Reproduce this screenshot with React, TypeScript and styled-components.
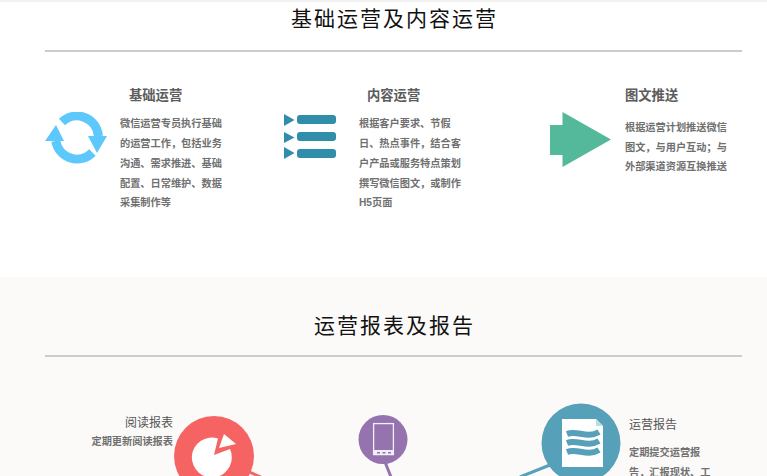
import React from "react";
import styled, { createGlobalStyle } from "styled-components";

const Global = createGlobalStyle`
  html, body { margin: 0; padding: 0; background: #fff; }
  body { font-family: "Liberation Sans", "Noto Sans CJK SC", sans-serif; overflow: hidden; }
`;

const Page = styled.div`
  width: 767px;
  height: 476px;
  overflow: hidden;
  border-top: 2px solid #f2f2f2;
  box-sizing: border-box;
`;

const Section = styled.section<{ $bg: string; $h: number; $pt: number }>`
  background: ${(p) => p.$bg};
  height: ${(p) => p.$h}px;
  padding-top: ${(p) => p.$pt}px;
  box-sizing: border-box;
`;

const Title = styled.h2<{ $h: number }>`
  margin: 0 25px 0 45px;
  padding-left: 2px;
  height: ${(p) => p.$h}px;
  line-height: 32px;
  font-size: 21px;
  font-weight: 400;
  letter-spacing: 2px;
  color: #111;
  text-align: center;
  border-bottom: 2px solid #ccc;
  box-sizing: border-box;
`;

const Features = styled.div`
  display: grid;
  grid-template-columns: 239px 266px 1fr;
  margin: 32px 0 0 45px;
`;

const Feature = styled.div<{ $gap: number }>`
  display: flex;
  align-items: flex-start;
  gap: ${(p) => p.$gap}px;
`;

const IconSlot = styled.div<{ $w: number; $top: number }>`
  flex: none;
  width: ${(p) => p.$w}px;
  margin-top: ${(p) => p.$top}px;
  line-height: 0;
`;

const Copy = styled.div`
  width: 104px;
  padding-top: 2px;
`;

const Heading = styled.h3<{ $indent: number; $gap: number }>`
  margin: 0 0 ${(p) => p.$gap}px ${(p) => p.$indent}px;
  font-size: 13.3px;
  line-height: 20px;
  font-weight: 700;
  color: #5c5c5c;
  white-space: nowrap;
`;

const Body = styled.p`
  margin: 0;
  font-size: 10.2px;
  line-height: 19.7px;
  font-weight: 700;
  color: #707070;
`;

const Diagram = styled.div`
  position: relative;
  height: 120px;
`;

const Node = styled.svg<{ $x: number; $y: number }>`
  position: absolute;
  left: ${(p) => p.$x}px;
  top: ${(p) => p.$y}px;
  display: block;
`;

const Note = styled.div<{ $x: number; $y: number; $w: number; $align?: string }>`
  position: absolute;
  left: ${(p) => p.$x}px;
  top: ${(p) => p.$y}px;
  width: ${(p) => p.$w}px;
  text-align: ${(p) => p.$align ?? "left"};
`;

const NoteTitle = styled.div<{ $gap: number }>`
  font-size: 12px;
  line-height: 18px;
  color: #555;
  margin-bottom: ${(p) => p.$gap}px;
`;

const NoteBody = styled.div<{ $lh: number }>`
  font-size: 10.2px;
  line-height: ${(p) => p.$lh}px;
  font-weight: 700;
  color: #707070;
`;

const RefreshIcon = () => (
  <svg width="62" height="52" viewBox="0 0 62 52">
    <g fill="none" stroke="#5cc8fb" strokeWidth="9">
      <path d="M17 10.100A21.500 21.500 0 0 1 53.400 24" />
      <path d="M10.800 29A21.500 21.500 0 0 0 47.400 40.500" />
    </g>
    <path d="M11 13L0 29H19Z M43 24H62L52 41Z" fill="#5cc8fb" />
  </svg>
);

const ListIcon = () => (
  <svg width="53" height="46" viewBox="0 0 53 46">
    <g fill="#318eaa">
      <path d="M0 0L10.500 6L0 12Z" />
      <rect x="13" y="1" width="39" height="9" rx="3" />
      <path d="M0 18L10.500 23.500L0 29Z" />
      <rect x="13" y="18" width="39" height="9" rx="3" />
      <path d="M0 33L10.500 39L0 45Z" />
      <rect x="13" y="35" width="39" height="9" rx="3" />
    </g>
  </svg>
);

const ArrowIcon = () => (
  <svg width="61" height="55" viewBox="0 0 61 55">
    <path d="M0 13H12.500V0L61 27.500L12.500 55V43H0Z" fill="#53b99a" />
  </svg>
);

export default function App() {
  return (
    <Page>
      <Global />
      <Section $bg="#fff" $h={275} $pt={1}>
        <Title $h={49}>基础运营及内容运营</Title>
        <Features>
          <Feature $gap={13}>
            <IconSlot $w={62} $top={28}><RefreshIcon /></IconSlot>
            <Copy>
              <Heading $indent={9} $gap={8.4}>基础运营</Heading>
              <Body>微信运营专员执行基础的运营工作，包括业务沟通、需求推进、基础配置、日常维护、数据采集制作等</Body>
            </Copy>
          </Feature>
          <Feature $gap={22}>
            <IconSlot $w={53} $top={30}><ListIcon /></IconSlot>
            <Copy>
              <Heading $indent={8} $gap={8.4}>内容运营</Heading>
              <Body>根据客户要求、节假日、热点事件，结合客户产品或服务特点策划撰写微信图文，或制作H5页面</Body>
            </Copy>
          </Feature>
          <Feature $gap={14}>
            <IconSlot $w={61} $top={28}><ArrowIcon /></IconSlot>
            <Copy>
              <Heading $indent={0} $gap={12}>图文推送</Heading>
              <Body>根据运营计划推送微信图文，与用户互动；与外部渠道资源互换推送</Body>
            </Copy>
          </Feature>
        </Features>
      </Section>
      <Section $bg="#fbfaf8" $h={199} $pt={33}>
        <Title $h={47}>运营报表及报告</Title>
        <Diagram>
          <Node $x={240} $y={60} width="320" height="70" viewBox="0 0 320 70">
            <path d="M7 54L32 65" stroke="#f56462" strokeWidth="3" />
            <path d="M145 45L151 60" stroke="#9473ae" strokeWidth="3" />
            <path d="M310 48L280 60" stroke="#56a0b9" strokeWidth="3" />
          </Node>
          <Node $x={174} $y={59} width="80" height="80" viewBox="0 0 80 80">
            <circle cx="40" cy="40" r="40" fill="#f56462" />
            <path d="M40 39L44 22.400A20 20 0 1 0 56 33Z" fill="#fff" />
            <path d="M45 32L50 18L62 28Z" fill="#fff" />
          </Node>
          <Node $x={358} $y={58} width="50" height="50" viewBox="0 0 50 50">
            <circle cx="25" cy="24.500" r="24.500" fill="#9473ae" />
            <rect x="15.600" y="8.600" width="19.800" height="31" fill="none" stroke="#f3eff6" strokeWidth="1.300" />
            <rect x="15" y="35" width="21" height="5" fill="#f3eff6" />
            <path d="M19 37h3v1.500h-3z M24.500 37h3v1.500h-3z M30 37h3v1.500h-3z" fill="#9473ae" />
          </Node>
          <Node $x={541} $y={46} width="80" height="80" viewBox="0 0 80 80">
            <circle cx="40" cy="40" r="39.500" fill="#56a0b9" />
            <path d="M21 16H55L62 23V64H21Z" fill="#fff" />
            <path d="M55 16V23H62Z" fill="#bcdbe5" />
            <g fill="none" stroke="#56a0b9" strokeWidth="6">
              <path d="M26 31C36 27 46 36 58 29" />
              <path d="M26 40C36 36 46 45 58 38" />
              <path d="M26 49C36 45 46 54 58 47" />
            </g>
          </Node>
          <Note $x={60} $y={57} $w={113} $align="right">
            <NoteTitle $gap={3}>阅读报表</NoteTitle>
            <NoteBody $lh={14}>定期更新阅读报表</NoteBody>
          </Note>
          <Note $x={629} $y={59} $w={86}>
            <NoteTitle $gap={9}>运营报告</NoteTitle>
            <NoteBody $lh={20}>定期提交运营报告，汇报现状、工</NoteBody>
          </Note>
        </Diagram>
      </Section>
    </Page>
  );
}
